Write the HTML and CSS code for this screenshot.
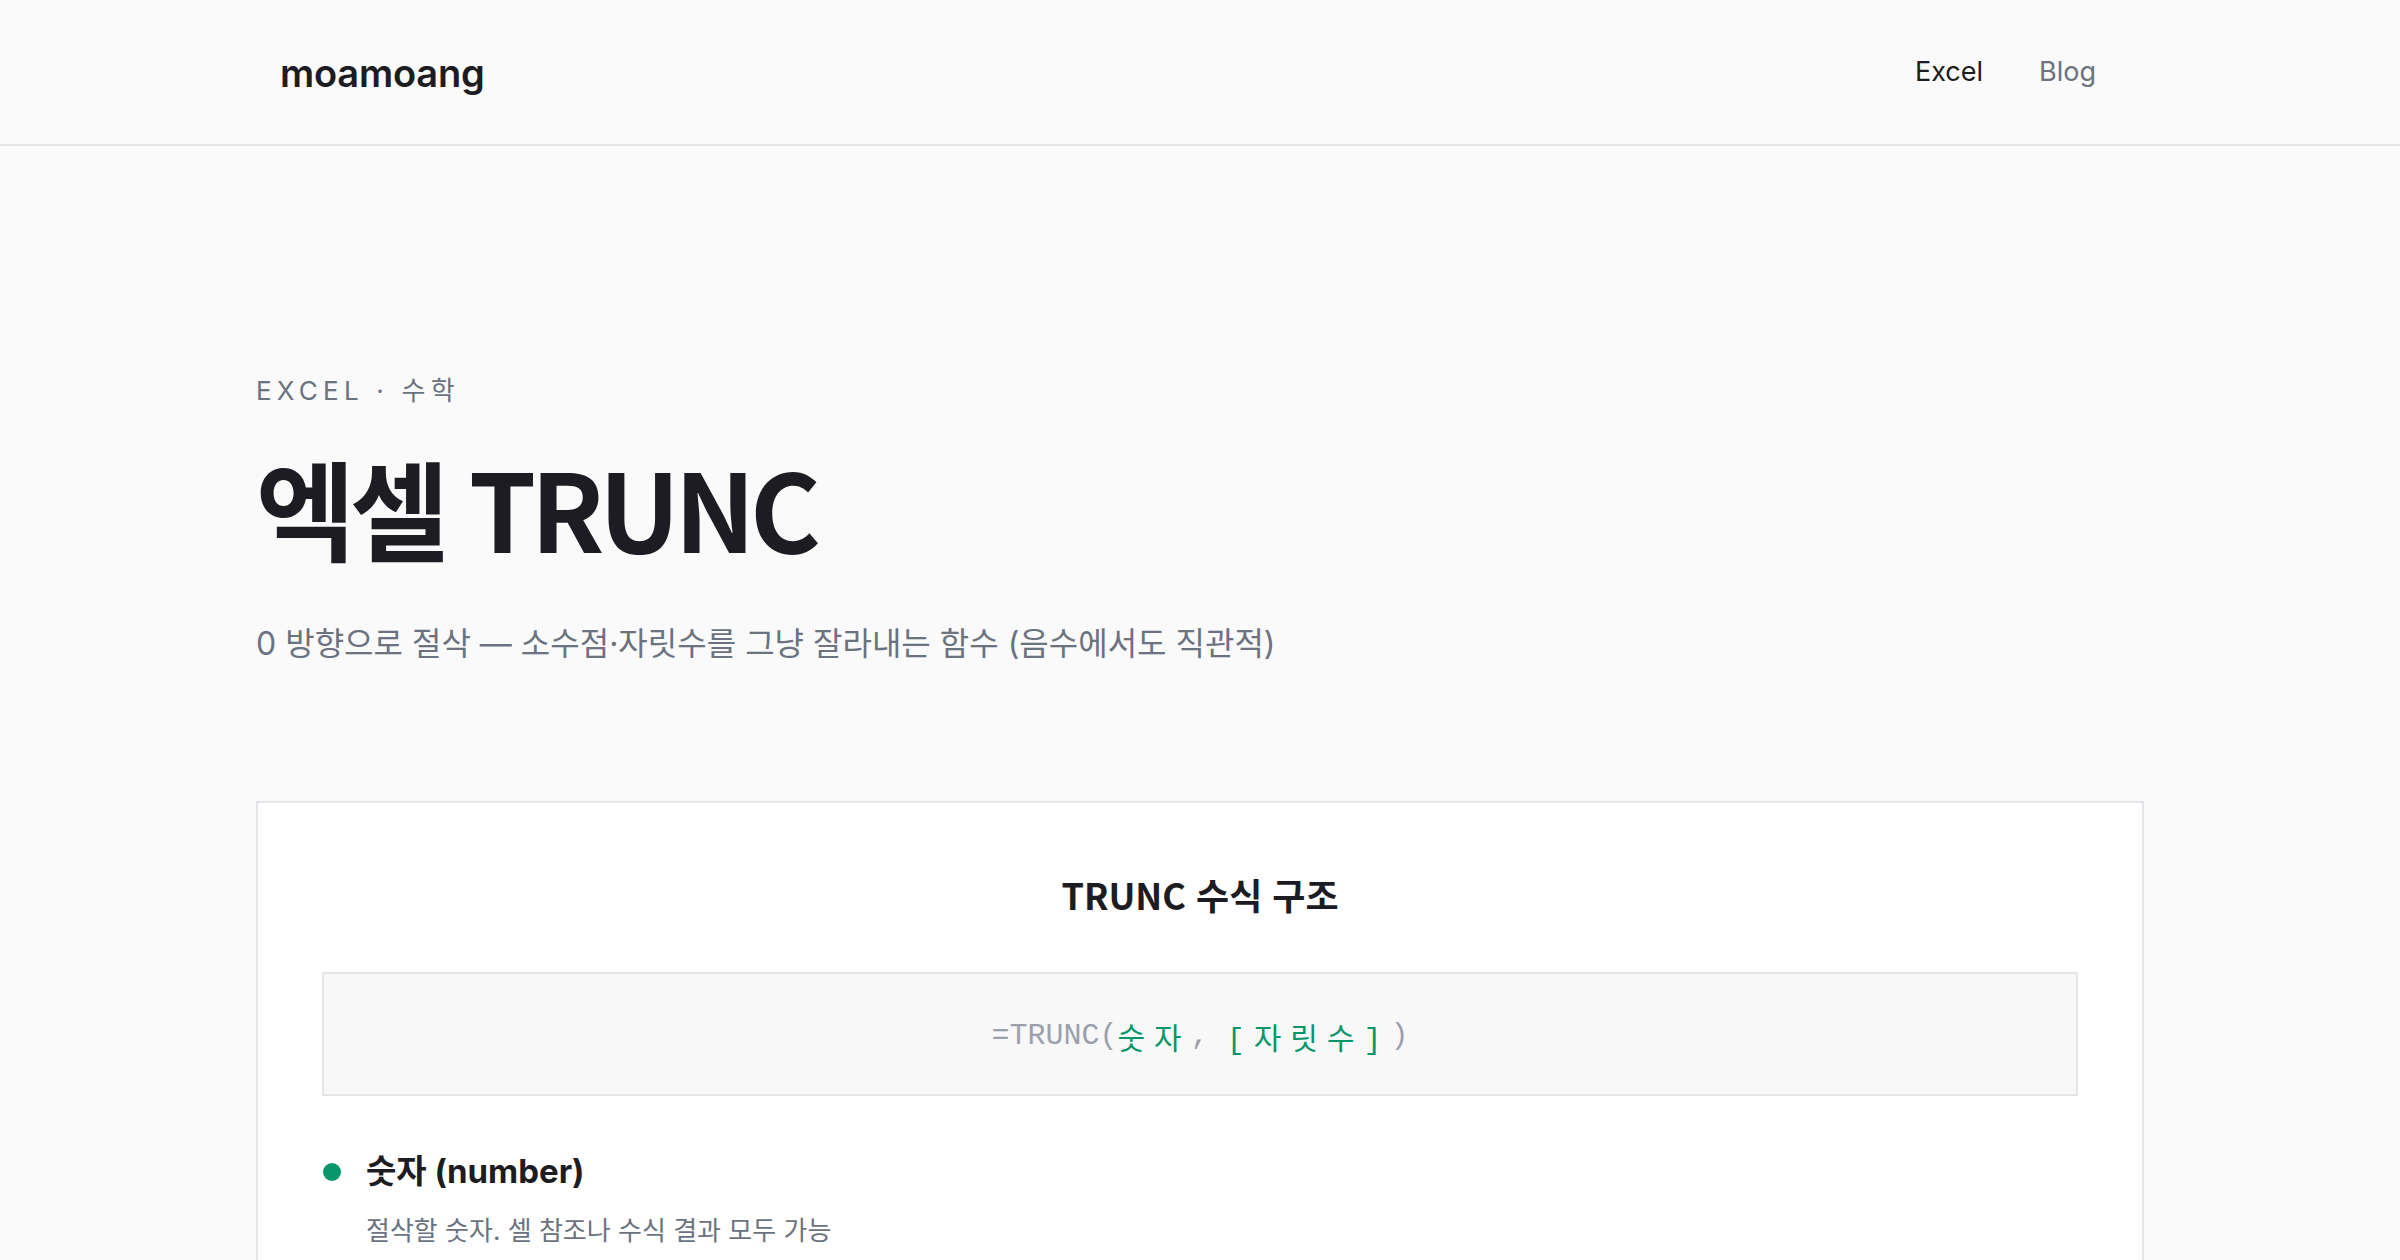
FILE: index.html
```html
<!DOCTYPE html>
<html lang="ko">
<head>
    <meta charset="UTF-8">
    <meta name="viewport" content="width=device-width, initial-scale=1.0">
    <title>엑셀 TRUNC - moamoang</title>
    <link rel="stylesheet" href="styles.css">
</head>
<body>
    <header class="site-header">
        <nav class="nav">
            <a href="#" class="logo">moamoang</a>
            <ul class="nav-links">
                <li><a href="#excel" class="active">Excel</a></li>
                <li><a href="#blog">Blog</a></li>
            </ul>
        </nav>
    </header>

    <main class="page">
        <section class="intro">
            <p class="eyebrow">Excel · 수학</p>
            <h1 class="title">엑셀 TRUNC</h1>
            <p class="lead">0 방향으로 절삭 — 소수점·자릿수를 그냥 잘라내는 함수 (음수에서도 직관적)</p>
        </section>

        <section class="syntax-card">
            <h2>TRUNC 수식 구조</h2>
            <div class="formula">=TRUNC(<span class="arg">숫자</span>, <span class="arg">[자릿수]</span>)</div>

            <ul class="args">
                <li>
                    <h3>숫자 (number)</h3>
                    <p>절삭할 숫자. 셀 참조나 수식 결과 모두 가능</p>
                </li>
            </ul>
        </section>
    </main>
</body>
</html>
```

FILE: styles.css
```css
:root {
    --bg: #fafafa;
    --text: #1c1c22;
    --muted: #6b7280;
    --line: #e4e4e9;
    --accent: #059669;
}

* {
    margin: 0;
    padding: 0;
    box-sizing: border-box;
}

body {
    font-family: "Inter", "Noto Sans CJK KR", sans-serif;
    background-color: var(--bg);
    color: var(--text);
}

/* header */
.site-header {
    height: 146px;
    border-bottom: 2px solid var(--line);
}

.nav {
    max-width: 1888px;
    height: 100%;
    margin: 0 auto;
    padding: 0 24px;
    display: flex;
    justify-content: space-between;
    align-items: center;
}

.logo {
    font-size: 38px;
    font-weight: 600;
    letter-spacing: -0.005em;
    color: var(--text);
    text-decoration: none;
    margin-top: 2px;
}

.nav-links {
    display: flex;
    gap: 8px;
    list-style: none;
}

.nav-links a {
    display: block;
    padding: 6px 24px 8px;
    font-size: 27px;
    color: var(--muted);
    text-decoration: none;
}

.nav-links a.active {
    color: var(--text);
}

/* intro */
.page {
    max-width: 1888px;
    margin: 0 auto;
    padding-top: 232px;
}

.eyebrow {
    font-size: 26px;
    line-height: 1;
    letter-spacing: 0.2em;
    text-transform: uppercase;
    color: var(--muted);
}

.title {
    margin-top: 38px;
    font-family: "Noto Sans CJK KR", sans-serif;
    font-size: 108px;
    font-weight: 700;
    line-height: 1.2;
    letter-spacing: -0.05em;
    color: var(--text);
}

.lead {
    margin-top: 48px;
    font-size: 32px;
    line-height: 1.5;
    color: var(--muted);
}

/* syntax card */
.syntax-card {
    margin-top: 133px;
    padding: 64px;
    background: #fff;
    border: 2px solid var(--line);
}

.syntax-card h2 {
    font-family: "Noto Sans CJK KR", sans-serif;
    font-size: 36px;
    font-weight: 700;
    line-height: 1.3;
    text-align: center;
    margin-top: 4px;
}

.formula {
    margin-top: 55px;
    height: 124px;
    display: flex;
    align-items: center;
    justify-content: center;
    padding-top: 4px;
    background: #f8f8f9;
    border: 2px solid var(--line);
    font-family: "Liberation Mono", "Noto Sans CJK KR", monospace;
    font-size: 30px;
    color: #9ca0ad;
    white-space: pre;
}

.formula .arg {
    color: var(--accent);
    letter-spacing: 9px;
}

.args {
    list-style: none;
    margin-top: 51px;
}

.args li {
    position: relative;
    padding-left: 44px;
}

.args li::before {
    content: "";
    position: absolute;
    left: 1px;
    top: 16px;
    width: 18px;
    height: 18px;
    border-radius: 50%;
    background: var(--accent);
}

.args h3 {
    font-size: 33px;
    font-weight: 700;
    line-height: 1.5;
}

.args p {
    margin-top: 14px;
    font-size: 26px;
    line-height: 1.5;
    color: var(--muted);
}
```
